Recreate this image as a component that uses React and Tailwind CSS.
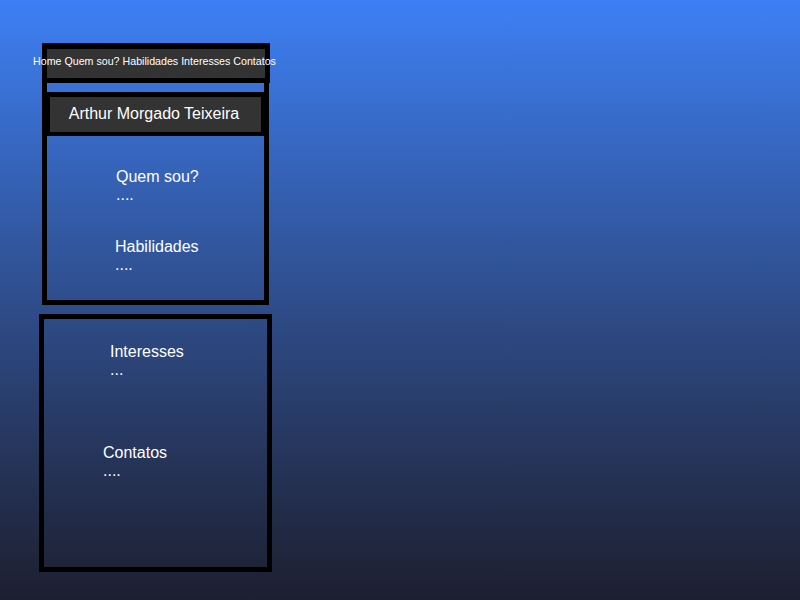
export default function App() {
  return (
    <div className="h-[600px] w-full bg-linear-to-b from-[#3d80f5] to-[#1c1f30] pt-[43px] pl-[39px] font-['Liberation_Sans',Arial,sans-serif] text-white">
      <nav className="ml-[3px] w-[228px] h-[40px] bg-black pt-[6px] pb-[5px] px-[5px]">
        <div className="h-[29px] bg-[#333333] flex items-center justify-center whitespace-nowrap text-[10.67px] pr-[3px] pb-[5px]">
          Home Quem sou? Habilidades Interesses Contatos
        </div>
      </nav>
      <div className="ml-[3px] w-[227px] h-[222px] border-x-[5px] border-b-[5px] border-black pt-[9px]">
        <header className="h-[44px] bg-[#333333] border-black border-t-[5px] border-x-[3px] border-b-4 flex items-center justify-center text-[16px] leading-[18px] pb-[2px] pr-[3px]">
          Arthur Morgado Teixeira
        </header>
        <section className="mt-[32px] ml-[69px] text-[16px] leading-[18px]">
          <p>Quem sou?</p>
          <p>....</p>
        </section>
        <section className="mt-[34px] ml-[68px] text-[16px] leading-[18px]">
          <p>Habilidades</p>
          <p>....</p>
        </section>
      </div>
      <div className="mt-[9px] w-[233px] h-[258px] border-[5px] border-black">
        <section className="mt-[24px] ml-[66px] text-[16px] leading-[18px]">
          <p>Interesses</p>
          <p>...</p>
        </section>
        <section className="mt-[65px] ml-[59px] text-[16px] leading-[18px]">
          <p>Contatos</p>
          <p>....</p>
        </section>
      </div>
    </div>
  );
}
